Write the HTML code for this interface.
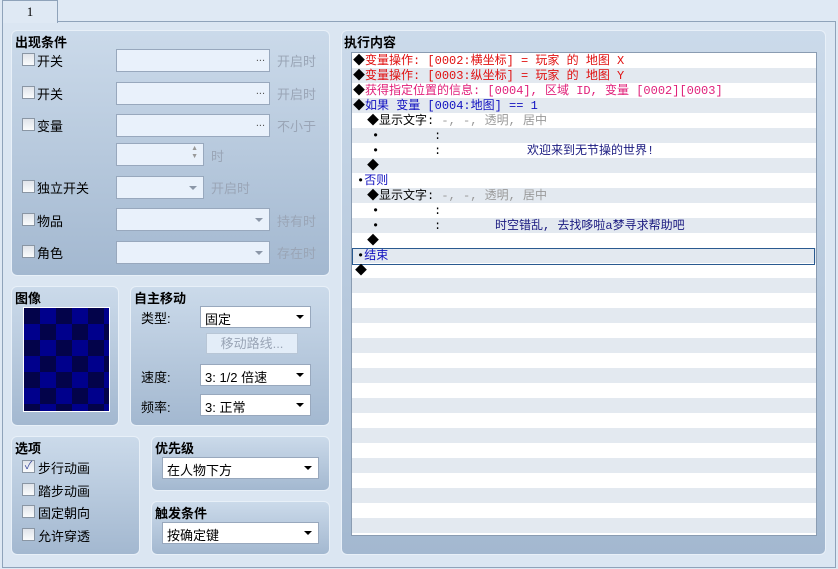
<!DOCTYPE html>
<html><head><meta charset="utf-8"><style>
*{margin:0;padding:0;box-sizing:border-box}
body{width:838px;height:569px;background:#dfe9f4;font-family:"Liberation Sans","Noto Sans CJK SC",sans-serif;font-size:13px;position:relative;overflow:hidden;color:#000}
.a{position:absolute}
.frame{left:2px;top:21px;width:834px;height:547px;border:1px solid #8fa3ba;background:#dbe6f2}
.tab{left:2px;top:0;width:56px;height:23px;border:1px solid #8fa3ba;border-bottom:none;background:#dfe9f4;text-align:center;line-height:22px;font-family:"Liberation Serif",serif;font-size:13px}
.pn{border-radius:6px;background:linear-gradient(#cbdaea,#a3b8d0);border:1px solid #e8f0f8}
.t{font-weight:bold;font-size:13px}
.cb{width:13px;height:13px;border:1px solid #8a96a4;background:linear-gradient(#e0e4ea,#fafbfc)}
.in{background:#e9f1fb;border:1px solid #98a8bd}
.g{color:#9aa5b6}
.dd{background:#fff;border:1px solid #98a8bd}
.arr{position:absolute;right:6px;top:50%;margin-top:-2px;border-left:4px solid transparent;border-right:4px solid transparent;border-top:4px solid #000}
.arrg{border-top-color:#8c97a8}
.row{position:absolute;left:1px;width:463px;height:15px;font-family:"Liberation Mono","Noto Sans CJK SC",monospace;font-size:12px;line-height:15px;white-space:nowrap}
.row .k{color:#000}
.r{color:#e01010}.p{color:#e0207a}.b{color:#1010c0}.gr{color:#999}
</style></head><body>
<div class="a frame"></div>
<div class="a tab">1</div>

<div class="a pn" style="left:11px;top:30px;width:319px;height:246px"></div>
<div class="a t" style="left:15px;top:32px">出现条件</div>
<div class="a cb" style="left:22px;top:53px"></div><div class="a" style="left:37px;top:51px">开关</div>
<div class="a in" style="left:116px;top:49px;width:154px;height:23px"><span class="a" style="right:4px;top:2px;font-size:11px;color:#555">...</span></div><div class="a g" style="left:277px;top:51px">开启时</div>
<div class="a cb" style="left:22px;top:86px"></div><div class="a" style="left:37px;top:84px">开关</div>
<div class="a in" style="left:116px;top:82px;width:154px;height:23px"><span class="a" style="right:4px;top:2px;font-size:11px;color:#555">...</span></div><div class="a g" style="left:277px;top:84px">开启时</div>
<div class="a cb" style="left:22px;top:118px"></div><div class="a" style="left:37px;top:116px">变量</div>
<div class="a in" style="left:116px;top:114px;width:154px;height:23px"><span class="a" style="right:4px;top:2px;font-size:11px;color:#555">...</span></div><div class="a g" style="left:277px;top:116px">不小于</div>
<div class="a in" style="left:116px;top:143px;width:88px;height:23px"><span class="a" style="right:5px;top:1px;font-size:7px;color:#999;line-height:8px">▲<br>▼</span></div><div class="a g" style="left:211px;top:146px">时</div>
<div class="a cb" style="left:22px;top:180px"></div><div class="a" style="left:37px;top:178px">独立开关</div>
<div class="a in" style="left:116px;top:176px;width:88px;height:23px"><i class="arr arrg"></i></div><div class="a g" style="left:211px;top:178px">开启时</div>
<div class="a cb" style="left:22px;top:213px"></div><div class="a" style="left:37px;top:211px">物品</div>
<div class="a in" style="left:116px;top:208px;width:154px;height:23px"><i class="arr arrg"></i></div><div class="a g" style="left:277px;top:211px">持有时</div>
<div class="a cb" style="left:22px;top:245px"></div><div class="a" style="left:37px;top:243px">角色</div>
<div class="a in" style="left:116px;top:241px;width:154px;height:23px"><i class="arr arrg"></i></div><div class="a g" style="left:277px;top:243px">存在时</div>

<div class="a pn" style="left:11px;top:286px;width:108px;height:140px"></div>
<div class="a t" style="left:15px;top:288px">图像</div>
<div class="a" style="left:23px;top:307px;width:87px;height:105px;border:1px solid #fff;background-color:#03034a;background-image:linear-gradient(45deg,#00008c 25%,transparent 25%,transparent 75%,#00008c 75%),linear-gradient(45deg,#00008c 25%,transparent 25%,transparent 75%,#00008c 75%);background-size:32px 32px;background-position:0 0,16px 16px"></div>

<div class="a pn" style="left:130px;top:286px;width:200px;height:140px"></div>
<div class="a t" style="left:134px;top:288px">自主移动</div>
<div class="a" style="left:141px;top:308px">类型:</div>
<div class="a dd" style="left:200px;top:306px;width:111px;height:22px"><span class="a" style="left:4px;top:2px">固定</span><i class="arr"></i></div>
<div class="a" style="left:206px;top:333px;width:92px;height:21px;background:#e3edf8;border:1px solid #b8c6d6;color:#9aa5b6;text-align:center;line-height:19px">移动路线...</div>
<div class="a" style="left:141px;top:367px">速度:</div>
<div class="a dd" style="left:200px;top:364px;width:111px;height:22px"><span class="a" style="left:4px;top:2px">3: 1/2 倍速</span><i class="arr"></i></div>
<div class="a" style="left:141px;top:397px">频率:</div>
<div class="a dd" style="left:200px;top:394px;width:111px;height:22px"><span class="a" style="left:4px;top:2px">3: 正常</span><i class="arr"></i></div>

<div class="a pn" style="left:11px;top:436px;width:129px;height:119px"></div>
<div class="a t" style="left:15px;top:438px">选项</div>
<div class="a cb" style="left:22px;top:460px;font-size:11px;line-height:11px;color:#4050a0;text-align:center">✓</div><div class="a" style="left:38px;top:458px">步行动画</div>
<div class="a cb" style="left:22px;top:483px"></div><div class="a" style="left:38px;top:481px">踏步动画</div>
<div class="a cb" style="left:22px;top:505px"></div><div class="a" style="left:38px;top:503px">固定朝向</div>
<div class="a cb" style="left:22px;top:528px"></div><div class="a" style="left:38px;top:526px">允许穿透</div>

<div class="a pn" style="left:151px;top:436px;width:179px;height:55px"></div>
<div class="a t" style="left:155px;top:438px">优先级</div>
<div class="a dd" style="left:162px;top:457px;width:157px;height:22px"><span class="a" style="left:4px;top:2px">在人物下方</span><i class="arr"></i></div>
<div class="a pn" style="left:151px;top:501px;width:179px;height:54px"></div>
<div class="a t" style="left:155px;top:503px">触发条件</div>
<div class="a dd" style="left:162px;top:522px;width:157px;height:22px"><span class="a" style="left:4px;top:2px">按确定键</span><i class="arr"></i></div>

<div class="a pn" style="left:341px;top:30px;width:485px;height:525px"></div>
<div class="a t" style="left:344px;top:32px">执行内容</div>
<div class="a" style="left:351px;top:52px;width:466px;height:484px;background:repeating-linear-gradient(#fff 0 15px,#e3e9f0 15px 30px);border:1px solid #8a9cb2;overflow:hidden">
<div class="row r" style="top:1px"><span class="k">◆</span>变量操作: [0002:横坐标] = 玩家 的 地图 X</div>
<div class="row r" style="top:16px"><span class="k">◆</span>变量操作: [0003:纵坐标] = 玩家 的 地图 Y</div>
<div class="row p" style="top:31px"><span class="k">◆</span>获得指定位置的信息: [0004], 区域 ID, 变量 [0002][0003]</div>
<div class="row b" style="top:46px"><span class="k">◆</span>如果 变量 [0004:地图] == 1</div>
<div class="row" style="top:61px;left:15px">◆显示文字: <span class="gr">-, -, 透明, 居中</span></div>
<div class="row" style="top:76px;left:20px">•<span style="position:absolute;left:62px">:</span></div>
<div class="row" style="top:91px;left:20px">•<span style="position:absolute;left:62px">:</span><span style="position:absolute;left:155px;color:#1a1a80">欢迎来到无节操的世界!</span></div>
<div class="row" style="top:106px;left:15px">◆</div>
<div class="row b" style="top:121px;left:5px"><span class="k">•</span>否则</div>
<div class="row" style="top:136px;left:15px">◆显示文字: <span class="gr">-, -, 透明, 居中</span></div>
<div class="row" style="top:151px;left:20px">•<span style="position:absolute;left:62px">:</span></div>
<div class="row" style="top:166px;left:20px">•<span style="position:absolute;left:62px">:</span><span style="position:absolute;left:123px;color:#1a1a80">时空错乱, 去找哆啦a梦寻求帮助吧</span></div>
<div class="row" style="top:181px;left:15px">◆</div>
<div class="row b" style="top:195px;left:0;width:463px;height:17px;border:1px solid #2a5a90;padding-left:4px"><span class="k">•</span>结束</div>
<div class="row" style="top:211px;left:3px">◆</div>
</div>
</body></html>
